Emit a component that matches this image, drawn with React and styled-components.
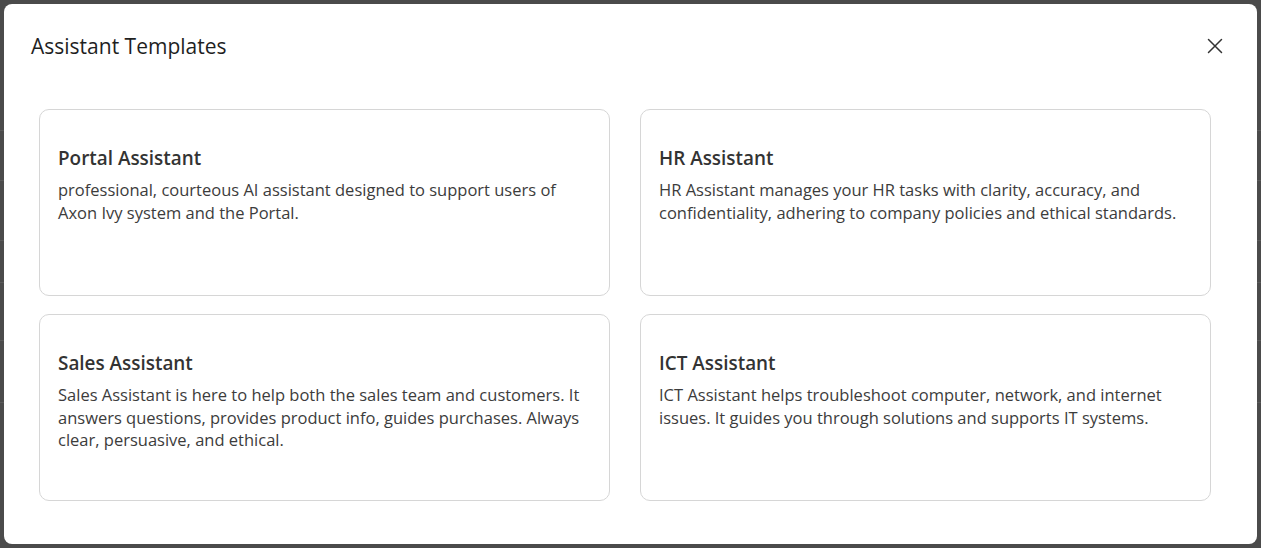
import React from "react";
import styled, { createGlobalStyle } from "styled-components";

const Global = createGlobalStyle`
  html, body { margin: 0; padding: 0; }
  body {
    font-family: "Open Sans", "Noto Sans", "Liberation Sans", sans-serif;
    background: #4b4b4b;
  }
  * { box-sizing: border-box; }
`;

const Backdrop = styled.div`
  width: 1261px;
  height: 548px;
  padding: 4px;
  background-color: #4b4b4b;
  background-image: linear-gradient(
    to bottom,
    transparent 0 130px, #5a5a5a 130px 131px,
    transparent 131px 180px, #5a5a5a 180px 181px,
    transparent 181px 240px, #5a5a5a 240px 241px,
    transparent 241px 282px, #5a5a5a 282px 283px,
    transparent 283px 340px, #5a5a5a 340px 341px,
    transparent 341px 402px, #5a5a5a 402px 403px,
    transparent 403px
  );
  overflow: hidden;
`;

const Dialog = styled.div`
  width: 1253px;
  height: 540px;
  background: #ffffff;
  border-radius: 8px;
  display: flex;
  flex-direction: column;
`;

const Header = styled.div`
  display: flex;
  align-items: center;
  justify-content: space-between;
  padding: 28px 34px 0 27px;
  height: 56px;
`;

const Title = styled.h2`
  margin: 0;
  font-size: 21px;
  line-height: 28px;
  font-weight: 500;
  color: #1f1f1f;
`;

const CloseButton = styled.button`
  border: none;
  background: transparent;
  padding: 0;
  width: 16px;
  height: 16px;
  display: flex;
  align-items: center;
  justify-content: center;
  cursor: pointer;
  color: #333;
`;

const Grid = styled.div`
  display: grid;
  grid-template-columns: 1fr 1fr;
  grid-auto-rows: 187px;
  column-gap: 30px;
  row-gap: 18px;
  padding: 49px 46px 0 35px;
`;

const Card = styled.div`
  border: 1px solid #d6d6d6;
  border-radius: 10px;
  padding: 36px 18px;
  background: #fff;
  cursor: pointer;
`;

const CardTitle = styled.div`
  font-size: 18.9px;
  line-height: 25px;
  font-weight: 600;
  color: #333;
  margin-bottom: 8px;
`;

const CardText = styled.div`
  font-size: 16.5px;
  line-height: 22.6px;
  color: #3c3c3c;
`;

const templates = [
  {
    title: "Portal Assistant",
    text: "professional, courteous AI assistant designed to support users of Axon Ivy system and the Portal.",
  },
  {
    title: "HR Assistant",
    text: "HR Assistant manages your HR tasks with clarity, accuracy, and confidentiality, adhering to company policies and ethical standards.",
  },
  {
    title: "Sales Assistant",
    text: "Sales Assistant is here to help both the sales team and customers. It answers questions, provides product info, guides purchases. Always clear, persuasive, and ethical.",
  },
  {
    title: "ICT Assistant",
    text: "ICT Assistant helps troubleshoot computer, network, and internet issues. It guides you through solutions and supports IT systems.",
  },
];

export default function App() {
  return (
    <>
      <Global />
      <Backdrop>
        <Dialog>
          <Header>
            <Title>Assistant Templates</Title>
            <CloseButton aria-label="Close">
              <svg width="16" height="16" viewBox="0 0 16 16">
                <path
                  d="M1.5 1.5 L14.5 14.5 M14.5 1.5 L1.5 14.5"
                  stroke="currentColor"
                  strokeWidth="1.5"
                  strokeLinecap="round"
                />
              </svg>
            </CloseButton>
          </Header>
          <Grid>
            {templates.map((t) => (
              <Card key={t.title}>
                <CardTitle>{t.title}</CardTitle>
                <CardText>{t.text}</CardText>
              </Card>
            ))}
          </Grid>
        </Dialog>
      </Backdrop>
    </>
  );
}
